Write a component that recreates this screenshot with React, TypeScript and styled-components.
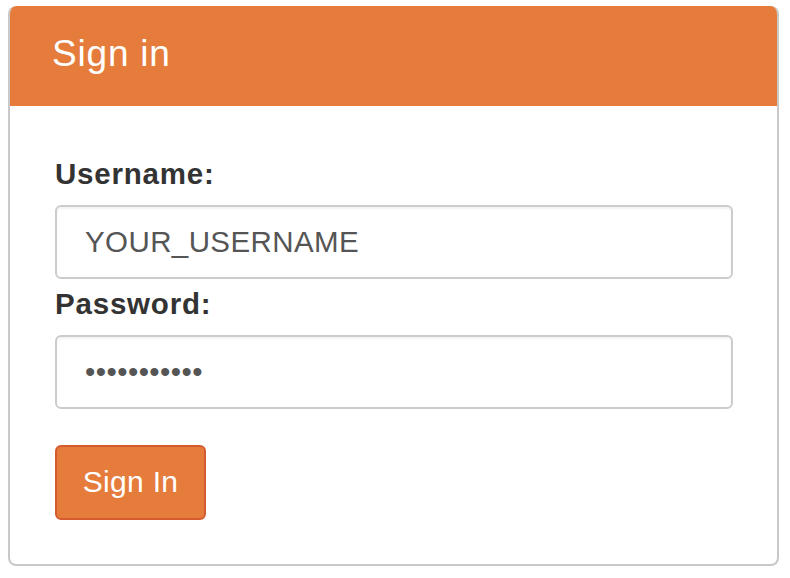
import React from 'react';
import styled, { createGlobalStyle } from 'styled-components';

const GlobalStyle = createGlobalStyle`
  html, body {
    margin: 0;
    padding: 0;
    background: #ffffff;
  }
  body {
    font-family: "Liberation Sans", Arial, sans-serif;
  }
`;

const Page = styled.div`
  width: 790px;
  height: 578px;
  box-sizing: border-box;
  padding: 6px 11px 0 8px;
`;

const Panel = styled.div`
  box-sizing: border-box;
  width: 771px;
  height: 560px;
  border: 2px solid #c9c9c9;
  border-top: none;
  border-radius: 8px;
  background: #ffffff;
  overflow: hidden;
`;

const Heading = styled.div`
  height: 100px;
  margin: 0 -2px;
  box-sizing: border-box;
  padding: 0 0 0 44px;
  display: flex;
  align-items: center;
  background: #e57c3c;
  border-radius: 8px 8px 0 0;
`;

const Title = styled.h3`
  margin: 0;
  padding-bottom: 4px;
  font-size: 37px;
  font-weight: 400;
  letter-spacing: 0.8px;
  color: #ffffff;
`;

const Body = styled.form`
  display: flex;
  flex-direction: column;
  padding: 49px 44px 0 45px;
`;

const Label = styled.label`
  display: block;
  font-size: 29.5px;
  line-height: 38px;
  font-weight: 700;
  letter-spacing: 0.8px;
  color: #333333;
  margin-bottom: 12px;
`;

const Field = styled.input<{ $last?: boolean }>`
  box-sizing: border-box;
  height: 74px;
  width: 100%;
  margin: 0 0 ${(p) => (p.$last ? '36px' : '6px')};
  padding: 0 28px;
  border: 2px solid #cccccc;
  border-radius: 6px;
  background: #ffffff;
  box-shadow: inset 0 2px 2px rgba(0, 0, 0, 0.05);
  font-family: "Liberation Sans", Arial, sans-serif;
  font-size: 29.5px;
  letter-spacing: 0.4px;
  color: #555555;
  outline: none;
`;

const SubmitButton = styled.button`
  align-self: flex-start;
  box-sizing: border-box;
  width: 151px;
  height: 75px;
  padding: 0 0 2px;
  border: 2px solid #d45b2f;
  border-radius: 6px;
  background: #e57c3c;
  color: #ffffff;
  font-family: "Liberation Sans", Arial, sans-serif;
  font-size: 30px;
  letter-spacing: 0.3px;
  cursor: pointer;
`;

export default function App() {
  return (
    <>
      <GlobalStyle />
      <Page>
        <Panel>
          <Heading>
            <Title>Sign in</Title>
          </Heading>
          <Body onSubmit={(e) => e.preventDefault()}>
            <Label htmlFor="username">Username:</Label>
            <Field id="username" type="text" defaultValue="YOUR_USERNAME" />
            <Label htmlFor="password">Password:</Label>
            <Field id="password" type="password" defaultValue="password123" $last />
            <SubmitButton type="submit">Sign In</SubmitButton>
          </Body>
        </Panel>
      </Page>
    </>
  );
}
